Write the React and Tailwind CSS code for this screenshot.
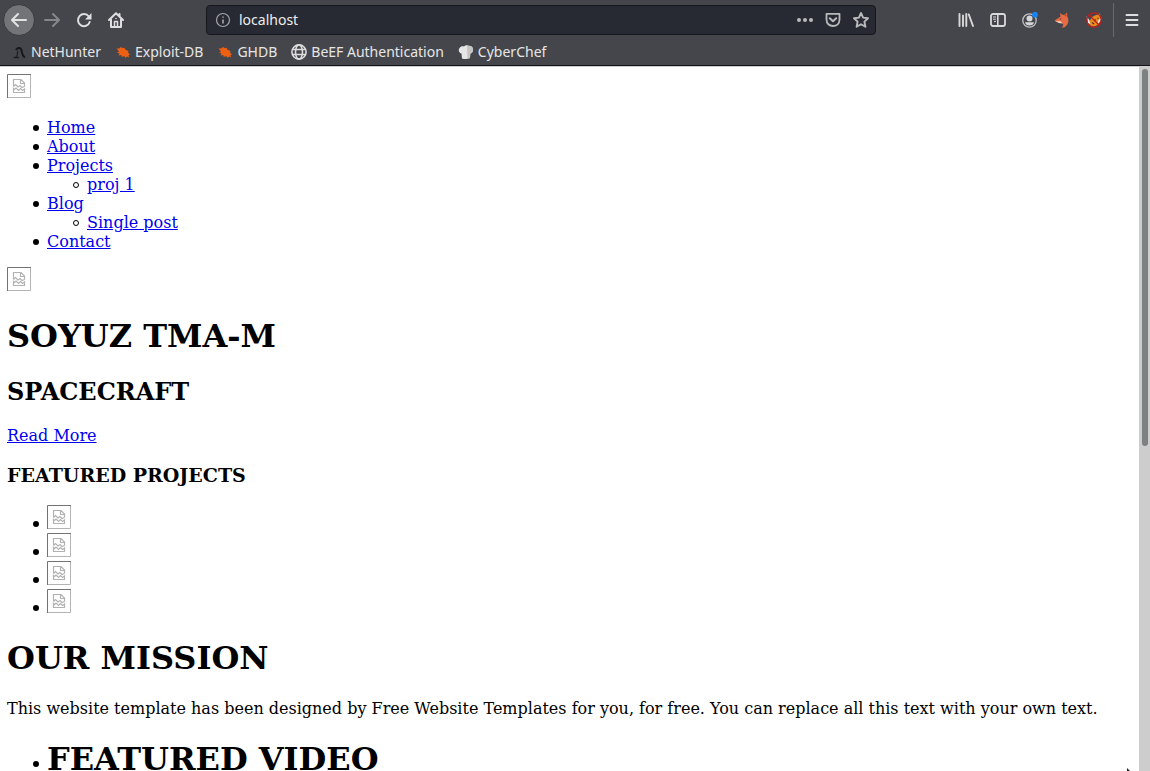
import React from 'react';

function BrokenImage() {
  return (
    <svg role="img" aria-label="Missing image" className="inline-block h-6 w-6 align-baseline" viewBox="0 0 24 24" fill="none">
      <rect x="0" y="0" width="24" height="24" fill="#fff" />
      <path d="M0.5 24V0.5H24" stroke="#737373" />
      <path d="M23.500 1V23.500H1" stroke="#b4b4b4" />
      <path d="M6.500 12.500V5.500H14L17.500 9V12.500M13.500 5.500V9.500H17.500M6.500 12.500L8.500 10.500L11 13L13 11.500L15 13.500L17.500 12.500" stroke="#b2b2b2" strokeWidth="1.200" />
      <path d="M6.500 14.500V18.500H17.500V15L15.500 16.500L13.500 14.500L11.500 16.500L9 14L7.500 15.500Z" stroke="#b2b2b2" strokeWidth="1.200" />
    </svg>
  );
}

function Bug() {
  return (
    <svg className="h-4 w-4" viewBox="0 0 16 16" aria-hidden="true">
      <path d="M1.500 4.500L4 4.500L6 3L8 4.300L9.500 3.800L10.500 5.800L13.500 7L13 8.500L15 10.500L13.500 11L14 13.500L12 12.500L10.500 14L9.500 12.200L6.500 12.800L6.300 11L3.500 11.500L4.500 9.500L2 8.500L4 7.500Z" fill="#ed5f12" />
    </svg>
  );
}

function Dragon() {
  return (
    <svg className="h-4 w-4" viewBox="0 0 16 16" fill="none" aria-hidden="true">
      <path d="M5 6C6.500 2.800 10 3.500 10.500 6.500C11 9.500 11.500 12 14 13.500" stroke="#17181b" strokeWidth="2" />
      <path d="M7 7C5.500 9 7.500 11 5 13M2.500 13.500H8" stroke="#1f2023" strokeWidth="1.300" />
    </svg>
  );
}

function Globe() {
  return (
    <svg className="h-4 w-4" viewBox="0 0 16 16" fill="none" stroke="#dcdcdd" strokeWidth="1.600" aria-hidden="true">
      <circle cx="8" cy="8" r="7.100" />
      <ellipse cx="8" cy="8" rx="3.500" ry="7.100" />
      <path d="M1.500 5.500H14.500M1.500 10.500H14.500" />
    </svg>
  );
}

function ChefHat() {
  return (
    <svg className="h-4 w-4" viewBox="0 0 16 16" aria-hidden="true">
      <path d="M4 14.500L3.500 9.500C0.500 9 0 5 2 3.500C3 2 5 2 6 2.500C7.500 0.800 10 1 11 2.300C13.500 1.500 15.500 3.500 15 6C15 8 13.500 9.500 12.300 9.500L12 14C9.500 15.300 6.500 15.300 4 14.500Z" fill="#e6e6e6" />
      <path d="M9 2C10.500 1 13 2 15 4.500C15.500 8 13.500 9.500 12.300 9.500L12 14L9.500 14.800Z" fill="#c5c5c5" />
    </svg>
  );
}

const bookmarks = [
  { label: 'NetHunter', Icon: Dragon },
  { label: 'Exploit-DB', Icon: Bug },
  { label: 'GHDB', Icon: Bug },
  { label: 'BeEF Authentication', Icon: Globe },
  { label: 'CyberChef', Icon: ChefHat },
];

function IconButton({ label, children }) {
  return (
    <button type="button" aria-label={label} className="flex h-8 w-8 shrink-0 items-center justify-center">
      {children}
    </button>
  );
}

function Toolbar() {
  return (
    <div className="flex h-10 items-center pr-1 pl-[3px]">
      <button type="button" aria-label="Back" className="flex h-8 w-8 shrink-0 items-center justify-center rounded-full border border-[#38393d] bg-[#737477]">
        <svg className="h-4 w-4" viewBox="0 0 16 16" fill="none" stroke="#e2e2e3" strokeWidth="2" strokeLinecap="round" strokeLinejoin="round">
          <path d="M15 8H1.500M7 2L1 8L7 14" />
        </svg>
      </button>
      <div className="ml-px flex">
        <IconButton label="Forward">
          <svg className="h-4 w-4" viewBox="0 0 16 16" fill="none" stroke="#86878b" strokeWidth="2" strokeLinecap="round" strokeLinejoin="round">
            <path d="M1 8H14.500M9 2L15 8L9 14" />
          </svg>
        </IconButton>
        <IconButton label="Reload">
          <svg className="h-4 w-4" viewBox="0 0 16 16" fill="none">
            <path d="M12.800 4.500A6 6 0 1 0 13.700 10" stroke="#dedee0" strokeWidth="2" strokeLinecap="round" />
            <path d="M15.500 1V7.500H9Z" fill="#dedee0" />
          </svg>
        </IconButton>
        <IconButton label="Home">
          <svg className="h-4 w-4" viewBox="0 0 16 16" fill="none" stroke="#dedee0" strokeWidth="2" strokeLinecap="round" strokeLinejoin="round">
            <path d="M1 8L8 1.300L15 8M3 7.500V15H13V7.500M11.500 2V4" />
            <path d="M6.500 14.500V9.500H9.500V14.500" strokeWidth="1.500" />
            <path d="M7.700 6.500H8.300" strokeWidth="1.200" />
          </svg>
        </IconButton>
      </div>

      <div className="ml-[74px] flex h-[30px] min-w-0 flex-1 items-center rounded-sm border border-[#16171a] bg-[#282a33] pl-2">
        <svg className="h-4 w-4 shrink-0" viewBox="0 0 16 16" fill="none" stroke="#a5a6aa" aria-hidden="true">
          <circle cx="8" cy="8" r="6.500" strokeWidth="1.200" />
          <path d="M8 7.500V11.500M8 4.500V5.800" strokeWidth="1.600" />
        </svg>
        <input aria-label="Address" defaultValue="localhost" className="ml-2 min-w-0 flex-1 bg-transparent text-sm leading-5 text-[#ededee] outline-none" />
        <button type="button" aria-label="Page actions" className="flex h-7 w-7 items-center justify-center">
          <svg className="h-4 w-4" viewBox="0 0 16 16" fill="#b9babc">
            <circle cx="2" cy="8" r="2" />
            <circle cx="8" cy="8" r="2" />
            <circle cx="14" cy="8" r="2" />
          </svg>
        </button>
        <button type="button" aria-label="Save to Pocket" className="flex h-7 w-7 items-center justify-center">
          <svg className="h-4 w-4" viewBox="0 0 16 16" fill="none" stroke="#b9babc" strokeWidth="1.800" strokeLinecap="round" strokeLinejoin="round">
            <path d="M1.500 1.800H14.500V7.500C14.500 11.500 11.700 14 8 14S1.500 11.500 1.500 7.500Z" />
            <path d="M4.800 6.300L8 9.300L11.200 6.300" strokeWidth="2" />
          </svg>
        </button>
        <button type="button" aria-label="Bookmark this page" className="flex h-7 w-7 items-center justify-center">
          <svg className="h-4 w-4" viewBox="0 0 16 16" fill="none" stroke="#b9babc" strokeWidth="1.900" strokeLinejoin="round">
            <path d="M8 1L10.100 5.600L15 6.200L11.400 9.600L12.400 14.800L8 12.200L3.600 14.800L4.600 9.600L1 6.200L5.900 5.600Z" />
          </svg>
        </button>
      </div>

      <div className="ml-[74px] flex shrink-0 items-center">
        <IconButton label="Library">
          <svg className="h-4 w-4" viewBox="0 0 16 16" fill="none" stroke="#d9d9da" strokeWidth="1.900" strokeLinecap="round">
            <path d="M1.500 2V14M5 3.500V14M8.300 2V14M10.800 2.500L15 14" />
          </svg>
        </IconButton>
        <IconButton label="Sidebars">
          <svg className="h-4 w-4" viewBox="0 0 16 16" fill="none" stroke="#d9d9da">
            <rect x="1" y="2" width="14" height="12" rx="2" strokeWidth="1.800" />
            <path d="M7.800 2V14" strokeWidth="1.600" />
            <path d="M3 5H6M3 7.200H6M4 9.400H6" />
          </svg>
        </IconButton>
        <IconButton label="Account">
          <svg className="h-4 w-4" viewBox="0 0 16 16">
            <circle cx="7.500" cy="8.500" r="6.700" fill="none" stroke="#bfc0c1" strokeWidth="1.300" />
            <circle cx="7.500" cy="6.500" r="3" fill="#d6d6d7" />
            <path d="M3 10.300H12C11.500 12.500 9.800 13.500 7.500 13.500S3.500 12.500 3 10.300Z" fill="#d6d6d7" />
            <circle cx="13" cy="2.700" r="2.900" fill="#1683f7" />
          </svg>
        </IconButton>
        <IconButton label="FoxyProxy">
          <svg className="h-4 w-4" viewBox="0 0 16 16">
            <path d="M0.500 8.500L4.500 6L6.500 4.500L6 1L9 3L11 2.500L13 0.500L13.300 4.500C15 7.500 14.800 11.500 12 14C11 15.200 9.500 15.800 7.500 15.500C10 13.500 9.500 12 7.500 11L2 9.800Z" fill="#e66a43" />
            <path d="M1.500 9.200L6.500 9.300L8.500 11.500L5 10.900Z" fill="#f4d6c8" />
            <path d="M5.500 6.800L7.500 6.500L6.500 7.800Z" fill="#47302a" />
            <path d="M10.500 3.800L12.300 2L12.200 4.500Z" fill="#a93c28" />
          </svg>
        </IconButton>
        <IconButton label="Proxy disabled">
          <svg className="h-4 w-4" viewBox="0 0 16 16">
            <path d="M2 8L4 8.500L6 5L9 3.500L14 1.500L14.500 7C14.500 11 11.500 13.500 8 14.500C4.500 14.500 2.500 12 2 8Z" fill="#e68a20" />
            <path d="M0.500 4L3 7.500L4.500 12L2 11ZM11 12.500L14 9.500L15.500 5.500L12.500 8Z" fill="#ede6db" />
            <path d="M8.500 7.500L10 8.300M11.500 6L12.500 6.800M6 10.500L8 12" stroke="#583117" strokeWidth="1.100" />
            <circle cx="8" cy="8" r="7.200" fill="none" stroke="#c51c1c" strokeWidth="1.200" />
            <path d="M3 3L13 13" stroke="#c51c1c" strokeWidth="1.300" />
          </svg>
        </IconButton>
        <span className="ml-[3px] h-[34px] w-px bg-[#68696b]" />
        <IconButton label="Open menu">
          <svg className="ml-1 h-4 w-4" viewBox="0 0 16 16" fill="none" stroke="#dedee0" strokeWidth="1.900" strokeLinecap="round">
            <path d="M2.500 3H13.500M2.500 8H13.500M2.500 13H13.500" />
          </svg>
        </IconButton>
      </div>
    </div>
  );
}

const link = 'text-[#0000ee] underline';
const list = 'pl-[26px]';
const dot = 'flex items-start gap-2 before:size-1.5 before:shrink-0 before:rounded-full';
const textItem = `${dot} before:mt-[7px] before:bg-black`;
const subItem = `${dot} before:mt-[7px] before:border before:border-black`;
const imageItem = `${dot} h-7 leading-6 before:mt-4 before:bg-black`;
const headingItem = `${dot} before:mt-[21px] before:bg-black`;

export default function App() {
  return (
    <div className="flex h-screen flex-col overflow-hidden bg-white">
      <header className="shrink-0 border-b border-[#121315] bg-[#45464b] font-['Noto_Sans',sans-serif]">
        <Toolbar />
        <nav aria-label="Bookmarks" className="flex h-[25px] items-start gap-3.5 pt-0.5 pl-[11px]">
          {bookmarks.map(({ label, Icon }) => (
            <a key={label} href="#" className="flex items-center gap-1 text-sm leading-5 whitespace-nowrap text-[#e6e6e7]">
              <Icon />
              {label}
            </a>
          ))}
        </nav>
      </header>

      <div className="flex min-h-0 flex-1 border-t border-[#cfcfcf]">
        <main className="min-w-0 flex-1 overflow-hidden px-[7px] pt-[7px] font-['DejaVu_Serif',serif] text-base leading-[19px] text-black">
          <a href="#" className="block h-7 leading-6"><BrokenImage /></a>
          <ul className={`mt-4 ${list}`}>
            <li className={textItem}><a href="#" className={link}>Home</a></li>
            <li className={textItem}><a href="#" className={link}>About</a></li>
            <li className={textItem}>
              <div>
                <a href="#" className={link}>Projects</a>
                <ul className={list}>
                  <li className={subItem}><a href="#" className={link}>proj 1</a></li>
                </ul>
              </div>
            </li>
            <li className={textItem}>
              <div>
                <a href="#" className={link}>Blog</a>
                <ul className={list}>
                  <li className={subItem}><a href="#" className={link}>Single post</a></li>
                </ul>
              </div>
            </li>
            <li className={textItem}><a href="#" className={link}>Contact</a></li>
          </ul>
          <div className="mt-4 h-7 leading-6"><BrokenImage /></div>
          <h1 className="mt-[22px] text-[32px] leading-[38px] font-bold">SOYUZ TMA-M</h1>
          <h2 className="mt-[23px] text-2xl leading-7 font-bold">SPACECRAFT</h2>
          <p className="mt-5"><a href="#" className={link}>Read More</a></p>
          <h3 className="mt-[19px] text-[19px] leading-[22px] font-bold">FEATURED PROJECTS</h3>
          <ul className={`mt-[19px] ${list}`}>
            <li className={imageItem}><a href="#"><BrokenImage /></a></li>
            <li className={imageItem}><a href="#"><BrokenImage /></a></li>
            <li className={imageItem}><a href="#"><BrokenImage /></a></li>
            <li className={imageItem}><a href="#"><BrokenImage /></a></li>
          </ul>
          <h1 className="mt-[22px] text-[32px] leading-[38px] font-bold">OUR MISSION</h1>
          <p className="mt-[22px]">
            This website template has been designed by Free Website Templates for you, for free. You can replace all this text with your own text.
          </p>
          <ul className={`mt-[22px] ${list}`}>
            <li className={headingItem}><h1 className="text-[32px] leading-[38px] font-bold">FEATURED VIDEO</h1></li>
          </ul>
        </main>
        <div className="w-[11px] shrink-0 bg-[#cdcdcd] px-[3px] pt-0.5" aria-hidden="true">
          <div className="h-[53.700%] w-1.5 rounded-full bg-[#7d8181]" />
        </div>
      </div>
      <svg className="pointer-events-none absolute right-5 bottom-0 h-[3px] w-1" viewBox="0 0 4 3" aria-hidden="true">
        <path d="M1 0V3H4Z" fill="#222" />
      </svg>
    </div>
  );
}
